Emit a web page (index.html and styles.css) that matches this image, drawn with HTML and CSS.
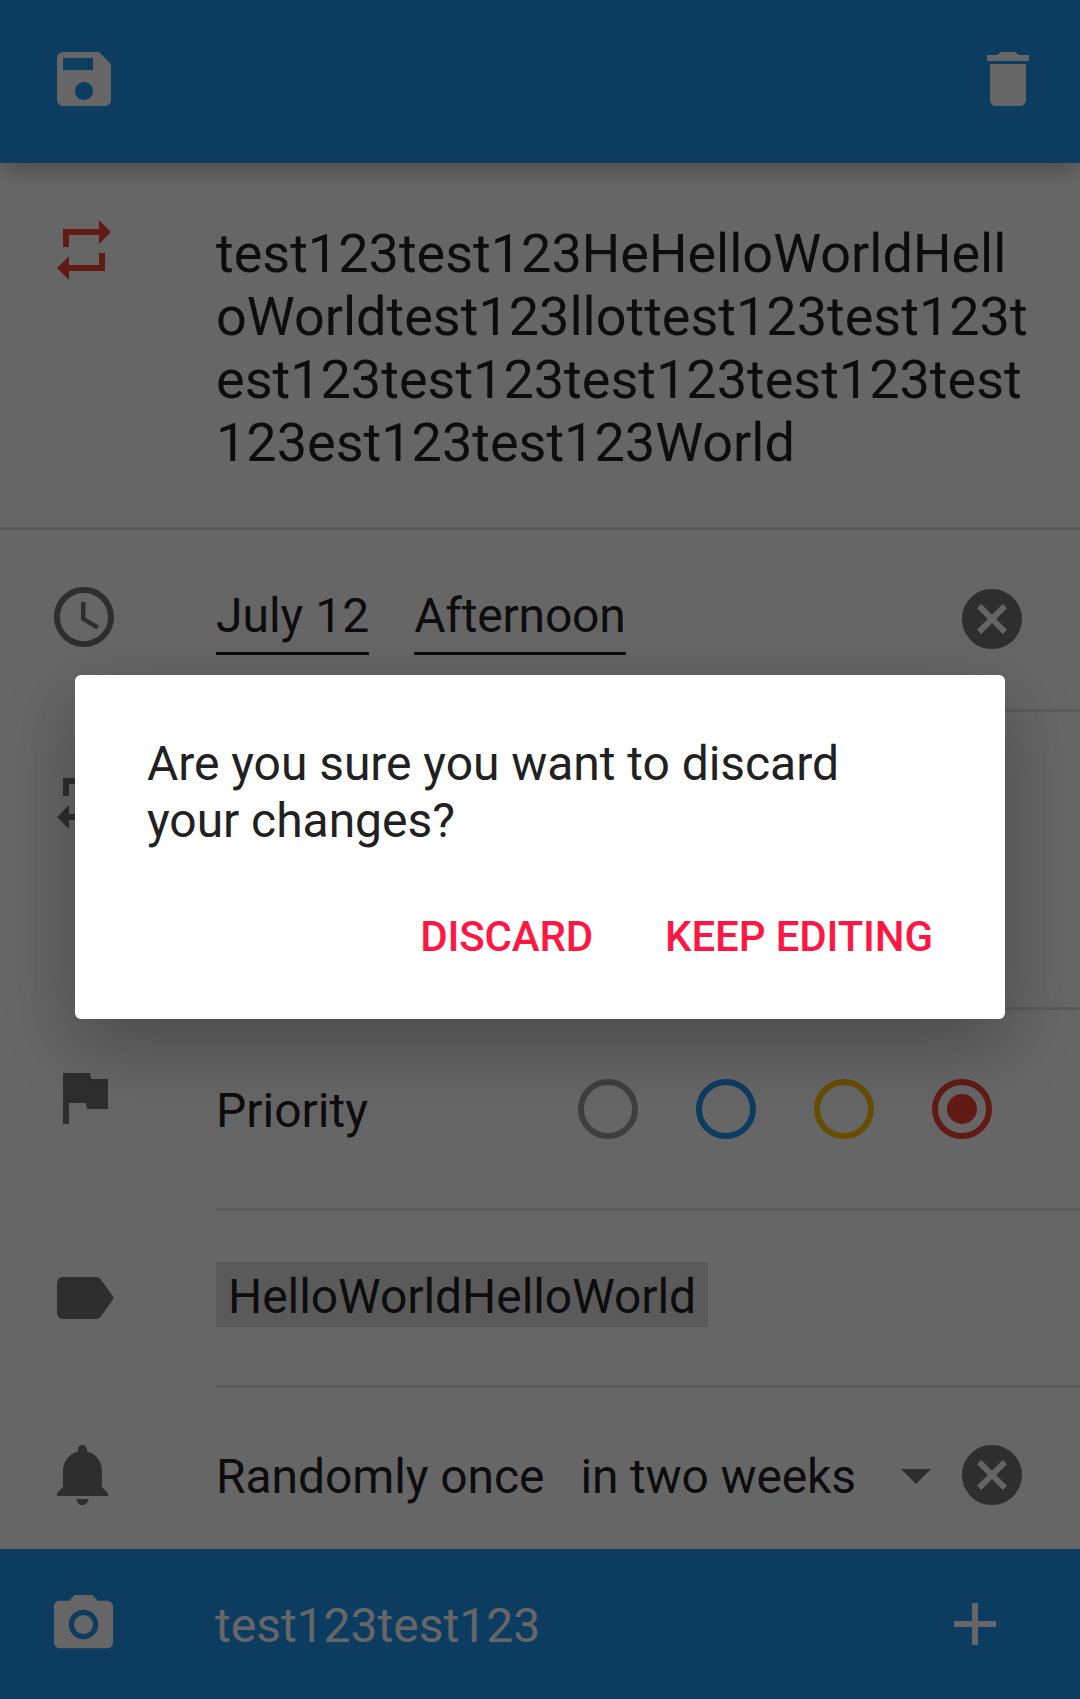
FILE: index.html
```html
<!DOCTYPE html>
<html lang="en">
<head>
<meta charset="utf-8">
<title>Edit task</title>
<link rel="stylesheet" href="styles.css">
</head>
<body>
<div class="screen">
  <header class="toolbar">
    <svg class="icon" viewBox="0 0 24 24"><path d="M17 3H5a2 2 0 0 0-2 2v14a2 2 0 0 0 2 2h14c1.100 0 2-.9 2-2V7l-4-4zm-5 16c-1.660 0-3-1.340-3-3s1.340-3 3-3 3 1.340 3 3-1.340 3-3 3zm3-10H5V5h10v4z"/></svg>
    <svg class="icon" viewBox="0 0 24 24"><path d="M6 19c0 1.100.9 2 2 2h8c1.100 0 2-.9 2-2V7H6v12zM19 4h-3.500l-1-1h-5l-1 1H5v2h14V4z"/></svg>
  </header>

  <main class="form">
    <section class="row row-title">
      <svg class="icon icon-red" viewBox="0 0 24 24"><path d="M7 7h10v3l4-4-4-4v3H5v6h2V7zm10 10H7v-3l-4 4 4 4v-3h12v-6h-2v4z"/></svg>
      <div class="cell title">test123test123HeHelloWorldHell<br>oWorldtest123llottest123test123t<br>est123test123test123test123test<br>123est123test123World</div>
    </section>

    <section class="row row-date">
      <svg class="icon" viewBox="0 0 24 24"><path d="M11.990 2C6.470 2 2 6.480 2 12s4.470 10 9.990 10C17.520 22 22 17.520 22 12S17.520 2 11.990 2zM12 20c-4.420 0-8-3.580-8-8s3.580-8 8-8 8 3.580 8 8-3.580 8-8 8zm.5-13H11v6l5.250 3.150.75-1.230-4.500-2.670z"/></svg>
      <div class="cell">
        <span class="field">July 12</span>
        <span class="field daypart">Afternoon</span>
        <svg class="icon clear" viewBox="0 0 24 24"><path d="M12 2C6.470 2 2 6.470 2 12s4.470 10 10 10 10-4.470 10-10S17.530 2 12 2zm5 13.590L15.590 17 12 13.410 8.410 17 7 15.590 10.590 12 7 8.410 8.410 7 12 10.590 15.590 7 17 8.410 13.410 12 17 15.590z"/></svg>
      </div>
    </section>

    <section class="row row-repeat">
      <svg class="icon" viewBox="0 0 24 24"><path d="M7 7h10v3l4-4-4-4v3H5v6h2V7zm10 10H7v-3l-4 4 4 4v-3h12v-6h-2v4z"/></svg>
      <div class="cell"></div>
    </section>

    <section class="row row-priority">
      <svg class="icon" viewBox="0 0 24 24"><path d="M14.400 6L14 4H5v17h2v-7h5.600l.4 2h7V6z"/></svg>
      <div class="cell">
        <span class="label">Priority</span>
        <div class="radios">
          <span class="radio"></span>
          <span class="radio blue"></span>
          <span class="radio yellow"></span>
          <span class="radio red"><span class="dot"></span></span>
        </div>
      </div>
    </section>

    <section class="row row-tags">
      <svg class="icon" viewBox="0 0 24 24"><path d="M17.630 5.840C17.270 5.330 16.670 5 16 5L5 5.010C3.900 5.010 3 5.900 3 7v10c0 1.100.9 1.990 2 1.990L16 19c.67 0 1.270-.33 1.630-.84L22 12l-4.370-6.160z"/></svg>
      <div class="cell"><span class="chip">HelloWorldHelloWorld</span></div>
    </section>

    <section class="row row-reminder">
      <svg class="icon" viewBox="0 0 24 24"><path d="M11.500 22c1.100 0 2-.9 2-2h-4c0 1.100.9 2 2 2zm6.500-6v-5.500c0-3.070-2.130-5.640-5-6.320V3.500c0-.83-.67-1.500-1.500-1.500S10 2.670 10 3.500v.68c-2.870.68-5 3.250-5 6.320V16l-2 2v1h17v-1l-2-2z"/></svg>
      <div class="cell">
        <span class="label">Randomly once</span>
        <span class="label when">in two weeks</span>
        <svg class="caret" viewBox="0 0 30 15"><path d="M0 0h30L15 15z"/></svg>
        <svg class="icon clear" viewBox="0 0 24 24"><path d="M12 2C6.470 2 2 6.470 2 12s4.470 10 10 10 10-4.470 10-10S17.530 2 12 2zm5 13.590L15.590 17 12 13.410 8.410 17 7 15.590 10.590 12 7 8.410 8.410 7 12 10.590 15.590 7 17 8.410 13.410 12 17 15.590z"/></svg>
      </div>
    </section>
  </main>

  <footer class="comment-bar">
    <svg class="camera" viewBox="0 0 24 24"><circle cx="12" cy="12" r="3.200"/><path d="M9 2L7.170 4H4c-1.100 0-2 .9-2 2v12c0 1.100.9 2 2 2h16c1.100 0 2-.9 2-2V6c0-1.100-.9-2-2-2h-3.170L15 2H9zm3 15c-2.760 0-5-2.240-5-5s2.240-5 5-5 5 2.240 5 5-2.240 5-5 5z"/></svg>
    <span class="comment">test123test123</span>
    <svg class="icon" viewBox="0 0 24 24"><path d="M19 13h-6v6h-2v-6H5v-2h6V5h2v6h6v2z"/></svg>
  </footer>

  <div class="scrim">
    <div class="dialog" role="dialog">
      <p class="message">Are you sure you want to discard<br>your changes?</p>
      <div class="actions">
        <span class="action">DISCARD</span>
        <span class="action">KEEP EDITING</span>
      </div>
    </div>
  </div>
</div>
</body>
</html>
```
FILE: styles.css
```css
* {
  box-sizing: border-box;
}

body {
  margin: 0;
  font-family: Roboto, sans-serif;
  font-size: 48px;
  line-height: 56px;
  color: #212121;
}

.screen {
  position: relative;
  display: flex;
  flex-direction: column;
  width: 1080px;
  height: 1699px;
  overflow: hidden;
  background: #fff;
}

.icon {
  display: block;
  flex: none;
  width: 72px;
  height: 72px;
  fill: #747474;
}

.icon-red {
  fill: #f44336;
}

.toolbar {
  display: flex;
  justify-content: space-between;
  flex: none;
  height: 163px;
  padding: 43px 36px 0 48px;
  background: #2196f3;
  box-shadow: 0 11px 22px -4px rgba(0, 0, 0, 0.27);
}

.toolbar .icon,
.comment-bar .icon {
  fill: #fff;
}

.form {
  display: flex;
  flex-direction: column;
  flex: 1;
}

.row {
  display: grid;
  grid-template-columns: 72px 1fr;
  column-gap: 96px;
  align-items: start;
  padding-left: 48px;
}

.cell {
  display: flex;
  align-self: stretch;
  align-items: flex-start;
  white-space: nowrap;
  border-bottom: 3px solid #e0e0e0;
}

.row-title {
  height: 367px;
  border-bottom: 3px solid #e0e0e0;
}

.row-title .icon {
  margin-top: 51px;
}

.title {
  display: block;
  padding-top: 59px;
  border: 0;
  font-size: 54px;
  line-height: 63px;
}

.row-date {
  height: 182px;
}

.row-date > .icon {
  margin-top: 51px;
}

.row-date .cell {
  gap: 45px;
  padding-top: 53px;
}

.field {
  height: 72px;
  padding-top: 5px;
  border-bottom: 3px solid #212121;
}

.daypart {
  letter-spacing: -0.2px;
}

.clear {
  margin-left: auto;
  margin-right: 52px;
}

.row-repeat {
  height: 298px;
}

.row-repeat .icon {
  margin-top: 51px;
}

.row-priority {
  height: 201px;
}

.row-priority .icon {
  margin-top: 51px;
}

.row-priority .cell {
  justify-content: space-between;
  padding: 69px 88px 0 0;
}

.row-priority .label {
  margin-top: 4px;
}

.radios {
  display: flex;
  gap: 58px;
}

.radio {
  display: flex;
  align-items: center;
  justify-content: center;
  width: 60px;
  height: 60px;
  border: 6px solid #9e9e9e;
  border-radius: 50%;
}

.blue {
  border-color: #2196f3;
}

.yellow {
  border-color: #ffc107;
}

.red {
  border-color: #f44336;
}

.dot {
  width: 30px;
  height: 30px;
  border-radius: 50%;
  background: #f44336;
}

.row-tags {
  height: 177px;
}

.row-tags .icon {
  margin-top: 51px;
}

.row-tags .cell {
  padding-top: 51px;
}

.chip {
  height: 65px;
  padding: 7px 12px 0;
  letter-spacing: -0.06px;
  background: #e0e0e0;
}

.row-reminder {
  height: 161px;
}

.row-reminder .icon {
  margin-top: 51px;
}

.row-reminder .cell {
  border: 0;
}

.row-reminder .label {
  margin-top: 61px;
  letter-spacing: -0.08px;
}

.row-reminder .when {
  margin-left: 36px;
  letter-spacing: -0.16px;
}

.caret {
  width: 30px;
  height: 15px;
  margin-top: 81px;
  margin-left: 45px;
  fill: #747474;
}

.comment-bar {
  display: flex;
  align-items: flex-start;
  flex: none;
  height: 150px;
  padding: 39px 69px 0 48px;
  background: #2196f3;
  color: #fff;
}

.camera {
  width: 71px;
  height: 71px;
  margin-top: 1px;
  fill: #fff;
}

.comment {
  flex: 1;
  margin-top: 10px;
  margin-left: 96px;
}

.scrim {
  position: absolute;
  inset: 0;
  display: flex;
  align-items: flex-start;
  justify-content: center;
  padding-top: 675px;
  background: rgba(0, 0, 0, 0.6);
}

.dialog {
  width: 930px;
  height: 344px;
  padding: 60px 72px 0;
  border-radius: 6px;
  background: #fff;
  box-shadow: 0 26px 70px rgba(0, 0, 0, 0.27);
}

.message {
  margin: 0;
  line-height: 57px;
  letter-spacing: -0.05px;
}

.actions {
  display: flex;
  justify-content: flex-end;
  gap: 72px;
  margin-top: 63px;
  font-size: 42px;
  font-weight: 500;
  line-height: 49px;
  letter-spacing: -0.14px;
  color: #ff1744;
}
```
